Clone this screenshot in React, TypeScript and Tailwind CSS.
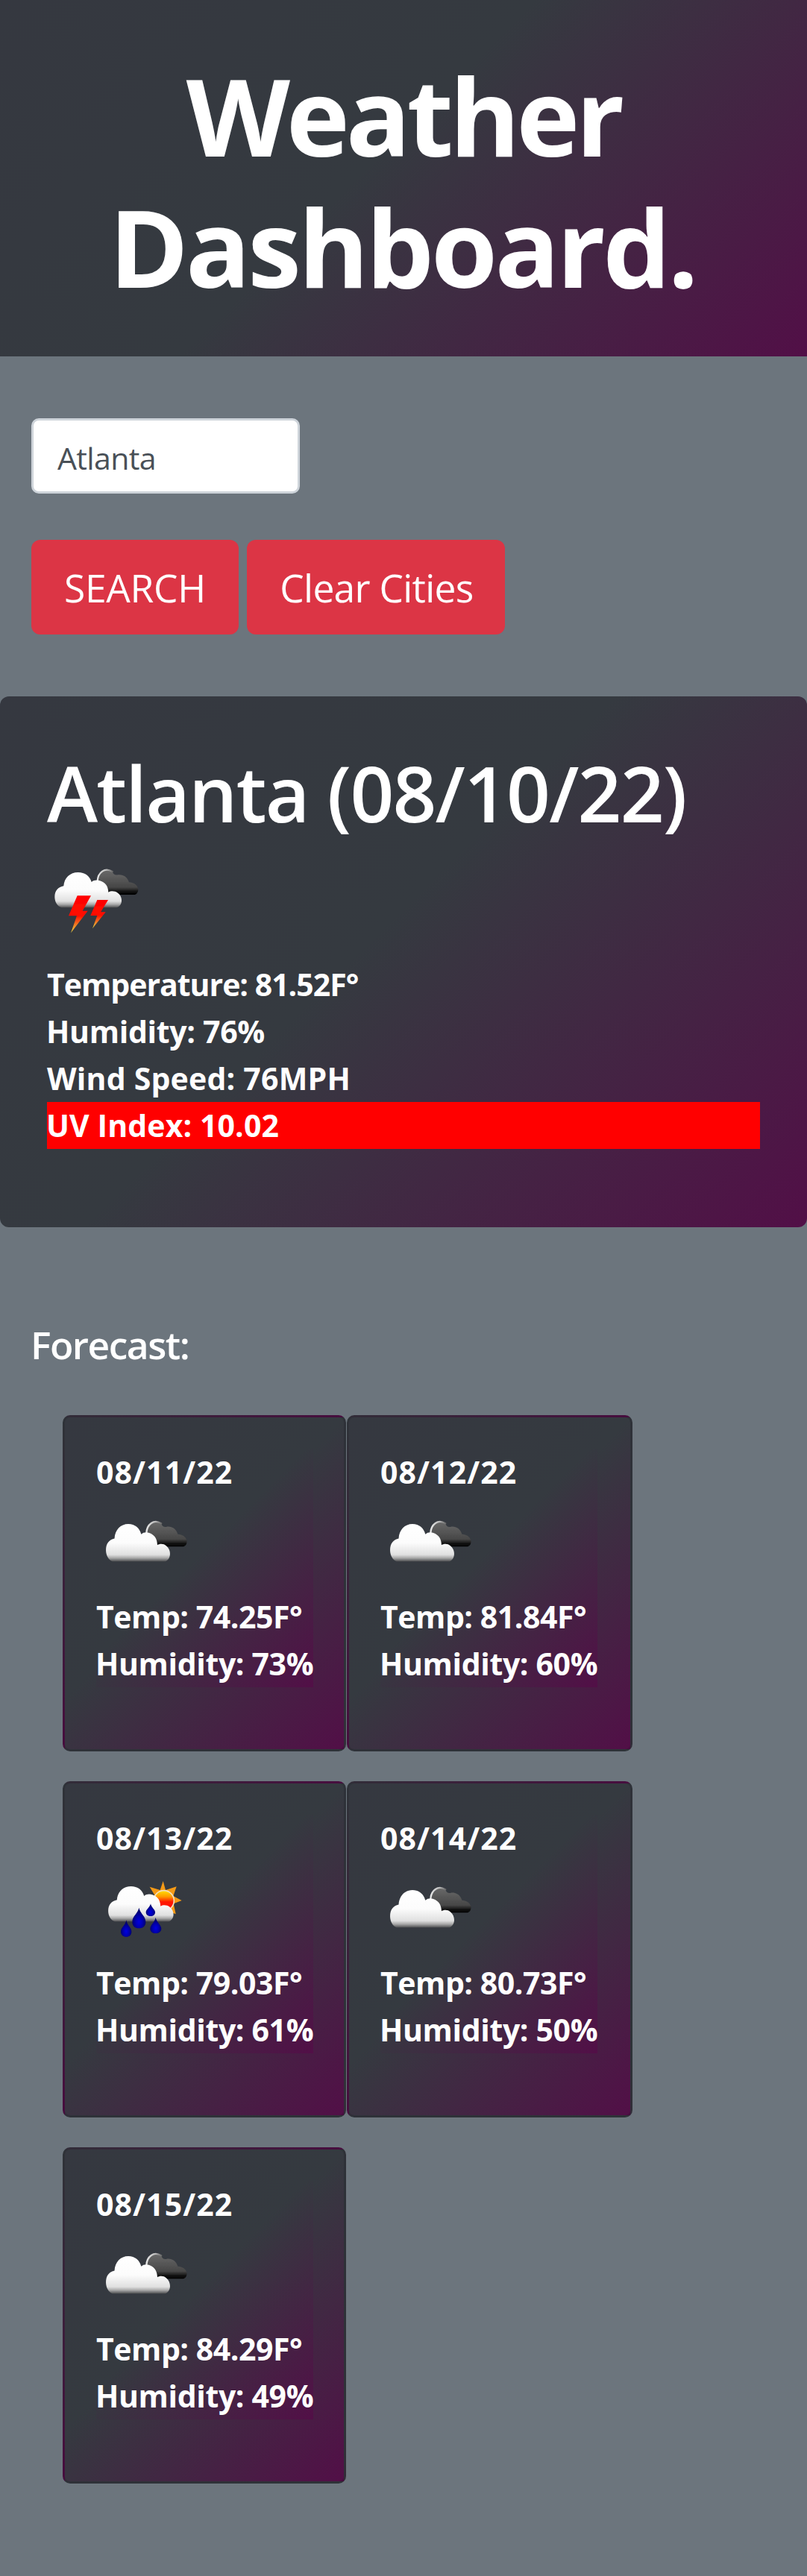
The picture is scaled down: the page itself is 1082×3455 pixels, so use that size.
import type { ReactNode } from "react";

type IconKind = "clouds" | "storm" | "sunRain";

const CLOUD =
  "M98 262 C82 258 70 240 70 219 C70 194 84 179 106 175 C108 142 132 120 164 120 C192 120 212 136 218 159 C228 150 242 150 252 154 C274 161 285 176 286 200 C296 194 312 194 324 203 C342 216 345 244 328 257 C324 261 320 262 314 262 Z";
const BACK_CLOUD =
  "M280 210 L392 210 C402 207 407 196 405 185 C401 169 387 161 369 160 C362 139 346 128 325 130 C312 133 305 126 302 118 C284 104 264 108 252 124 C244 135 241 146 238 166 Z";

function Defs({ id }: { id: string }) {
  return (
    <defs>
      <linearGradient id={`${id}-white`} x1="0" y1="0" x2="0" y2="1">
        <stop offset="0" stopColor="#ffffff" />
        <stop offset="0.5" stopColor="#fcfcfc" />
        <stop offset="0.82" stopColor="#e0e0e0" />
        <stop offset="0.91" stopColor="#a8a8a8" />
        <stop offset="1" stopColor="#4e4f51" />
      </linearGradient>
      <linearGradient id={`${id}-dark`} x1="0" y1="0" x2="0" y2="1">
        <stop offset="0" stopColor="#6a6a6a" />
        <stop offset="0.7" stopColor="#474747" />
        <stop offset="0.88" stopColor="#101010" />
        <stop offset="1" stopColor="#000000" />
      </linearGradient>
      <linearGradient id={`${id}-bolt`} x1="0" y1="0" x2="0" y2="1">
        <stop offset="0" stopColor="#ff0000" />
        <stop offset="0.55" stopColor="#ff1000" />
        <stop offset="0.75" stopColor="#f07020" />
        <stop offset="1" stopColor="#e8d840" />
      </linearGradient>
      <linearGradient id={`${id}-sun`} x1="0" y1="0" x2="0" y2="1">
        <stop offset="0" stopColor="#ffe000" />
        <stop offset="0.3" stopColor="#ff9a00" />
        <stop offset="0.55" stopColor="#ff1a00" />
        <stop offset="1" stopColor="#ff0000" />
      </linearGradient>
      <radialGradient id={`${id}-drop`} cx="0.5" cy="0.68" r="0.5">
        <stop offset="0" stopColor="#0000e0" />
        <stop offset="0.5" stopColor="#0000b4" />
        <stop offset="1" stopColor="#000070" />
      </radialGradient>
      <linearGradient id={`${id}-rim`} x1="0" y1="0" x2="1" y2="0">
        <stop offset="0" stopColor="#e8e8e8" />
        <stop offset="0.6" stopColor="#bdbdbd" />
        <stop offset="1" stopColor="#6a6a6a" />
      </linearGradient>
      <filter id={`${id}-soft`} x="-5%" y="-5%" width="110%" height="110%">
        <feGaussianBlur stdDeviation="2.2" />
      </filter>
    </defs>
  );
}

function BackCloud({ id }: { id: string }) {
  return (
    <>
      <path d={BACK_CLOUD} fill={`url(#${id}-dark)`} />
      <path
        d="M242 156 C244 120 272 98 302 117"
        fill="none"
        stroke={`url(#${id}-rim)`}
        strokeWidth="7"
        strokeLinecap="round"
      />
    </>
  );
}

function WeatherIcon({ kind, id }: { kind: IconKind; id: string }) {
  if (kind === "storm") {
    return (
      <svg className="block size-[131px]" viewBox="39 84 393 393">
        <Defs id={id} />
        <g filter={`url(#${id}-soft)`}>
          <BackCloud id={id} />
          <path d={CLOUD} fill={`url(#${id}-white)`} />
          <path d="M161 214 H216 L182 275 H203 L135 364 L159 295 H126 Z" fill={`url(#${id}-bolt)`} />
          <path d="M241 231 H285 L255 280 H275 L222 346 L241 294 H214 Z" fill={`url(#${id}-bolt)`} />
        </g>
      </svg>
    );
  }
  if (kind === "sunRain") {
    return (
      <svg className="block size-[131px]" viewBox="27 21 393 393">
        <Defs id={id} />
        <g filter={`url(#${id}-soft)`}>
          <path
            d="M296 99 L306 135 L350 121 L337 159 L371 177 L338 190 L347 231 L300 218 L255 180 L262 155 L242 122 L284 135 Z"
            fill="#f59a16"
          />
          <circle cx="299" cy="178" r="41" fill={`url(#${id}-sun)`} stroke="#f3dfc0" strokeWidth="5" />
          <path transform="translate(7 0) scale(0.975 1)" d={CLOUD} fill={`url(#${id}-white)`} />
          <path d="M199 206 C203 228 226 240 226 263 C226 280 214 289 199 289 C184 289 172 280 172 263 C172 240 195 228 199 206 Z" fill={`url(#${id}-drop)`} />
          <path d="M246 190 C248 205 264 213 264 224 C264 234 256 240 246 240 C236 240 227 234 227 224 C227 213 243 205 246 190 Z" fill={`url(#${id}-drop)`} />
          <path d="M266 245 C269 264 289 275 289 290 C289 302 278 309 266 309 C254 309 244 302 244 290 C244 275 263 264 266 245 Z" fill={`url(#${id}-drop)`} />
          <path d="M148 256 C151 276 169 286 169 302 C169 316 160 323 148 323 C136 323 126 316 126 302 C126 286 145 276 148 256 Z" fill={`url(#${id}-drop)`} />
        </g>
      </svg>
    );
  }
  return (
    <svg className="block size-[131px]" viewBox="27 18 393 393">
      <Defs id={id} />
      <g filter={`url(#${id}-soft)`}>
        <g transform="translate(-12 13) scale(0.995 1)">
          <BackCloud id={id} />
        </g>
        <path transform="translate(-1 5) scale(0.958 1.06)" d={CLOUD} fill={`url(#${id}-white)`} />
      </g>
    </svg>
  );
}

const GRADIENT = "bg-[linear-gradient(135deg,#353840_0%,#353a40_46%,#520f47_100%)]";

function Row({ className, children }: { className: string; children: ReactNode }) {
  return <li className={`h-[63px] whitespace-nowrap leading-[63px] ${className}`}>{children}</li>;
}

const forecast: { date: string; icon: IconKind; temp: string; humidity: string; width: string }[] = [
  { date: "08/11/22", icon: "clouds", temp: "74.25", humidity: "73", width: "w-[380px]" },
  { date: "08/12/22", icon: "clouds", temp: "81.84", humidity: "60", width: "w-[383px]" },
  { date: "08/13/22", icon: "sunRain", temp: "79.03", humidity: "61", width: "w-[380px]" },
  { date: "08/14/22", icon: "clouds", temp: "80.73", humidity: "50", width: "w-[383px]" },
  { date: "08/15/22", icon: "clouds", temp: "84.29", humidity: "49", width: "w-[380px]" },
];

export default function App() {
  return (
    <div className="h-[3455px] w-[1082px] overflow-hidden bg-[#6c757d] font-['Open_Sans','Noto_Sans',sans-serif] text-white">
      <header className={`h-[478px] pt-[66px] text-center text-[144px] font-bold leading-[176px] ${GRADIENT}`}>
        <h1>
          <span className="block tracking-[-5.2px]">Weather</span>
          <span className="block pr-[3px] tracking-[-3.8px]">Dashboard.</span>
        </h1>
      </header>

      <section className="px-[42px] pt-[83px]">
        <input
          className="block h-[101px] w-[360px] rounded-[10px] border-[3px] border-[#ced4da] bg-white px-[32px] pt-[5px] text-[41px] tracking-[-0.6px] text-[#495057] outline-none"
          defaultValue="Atlanta"
        />
        <div className="mt-[62px] flex gap-[11px]">
          <button className="h-[127px] w-[278px] rounded-[12px] bg-[#dc3545] pt-[3px] text-[51.5px] tracking-[-0.3px]">
            SEARCH
          </button>
          <button className="h-[127px] w-[346px] rounded-[12px] bg-[#dc3545] pl-[2px] pt-[3px] text-[51.5px] tracking-[-0.7px]">
            Clear Cities
          </button>
        </div>
      </section>

      <section className={`mt-[83px] h-[712px] rounded-[12px] px-[63px] pt-[66px] ${GRADIENT}`}>
        <h2 className="whitespace-nowrap text-[103px] font-semibold leading-[126px] tracking-[-1.8px]">
          Atlanta (08/10/22)
        </h2>
        <ul className="mt-[32px] text-[41px] font-bold">
          <li>
            <WeatherIcon kind="storm" id="current" />
          </li>
          <Row className="tracking-[-1px]">Temperature: 81.52F°</Row>
          <Row className="-ml-[1px] tracking-[-0.3px]">Humidity: 76%</Row>
          <Row className="tracking-[0.2px]">Wind Speed: 76MPH</Row>
          <Row className="bg-[#ff0000] tracking-[0.1px]">
            <span className="-ml-[1px]">UV Index: 10.02</span>
          </Row>
        </ul>
      </section>

      <h3 className="mt-[126px] pl-[41px] text-[51.5px] font-semibold leading-[63px] tracking-[-1.5px]">Forecast:</h3>

      <section className="mt-[63px] flex flex-wrap gap-x-[1px] gap-y-[40px] pl-[84px] pr-[126px]">
        {forecast.map((day) => (
          <article
            key={day.date}
            className={`h-[451px] rounded-[10px] border-[3px] border-black/[.125] px-[42px] pt-[42px] ${day.width} ${GRADIENT}`}
          >
            <ul className={`w-[291px] text-[41px] font-bold ${GRADIENT}`}>
              <Row className="tracking-[1.1px]">{day.date}</Row>
              <li>
                <WeatherIcon kind={day.icon} id={`d${day.date.slice(3, 5)}`} />
              </li>
              <Row className="tracking-[-0.45px]">Temp: {day.temp}F°</Row>
              <Row className="-ml-[1px] tracking-[-0.35px]">Humidity: {day.humidity}%</Row>
            </ul>
          </article>
        ))}
      </section>
    </div>
  );
}
